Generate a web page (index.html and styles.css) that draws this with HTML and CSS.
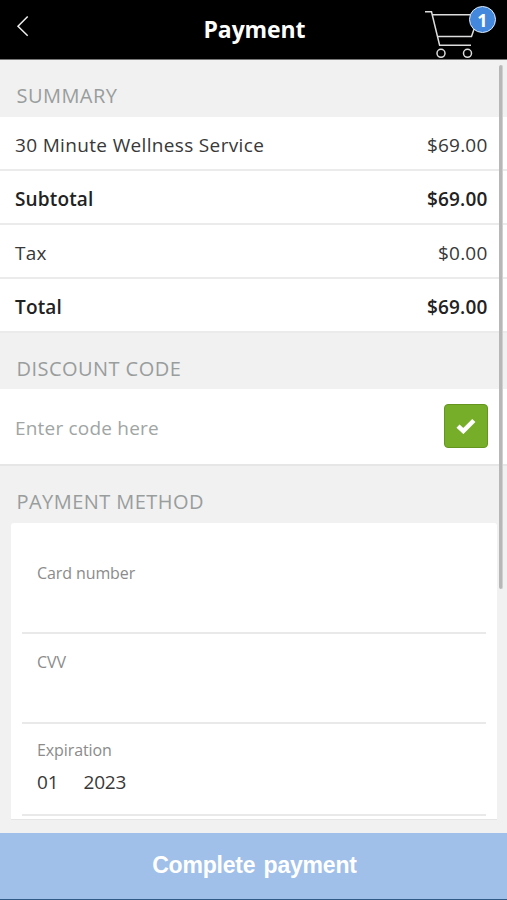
FILE: index.html
```html
<!DOCTYPE html>
<html lang="en">
<head>
<meta charset="utf-8">
<title>Payment</title>
<link rel="stylesheet" href="styles.css">
</head>
<body>
<div class="screen">
  <header class="topbar">
    <svg class="back" width="14" height="24" viewBox="0 0 14 24"><path d="M11.700 2.500 2 12.200l9.700 9.600"/></svg>
    <h1 class="title">Payment</h1>
    <div class="cart">
      <svg width="62" height="54" viewBox="0 0 62 54"><path d="M0 6.700h6.500L14.600 40.200H46M7.500 9.700H54L46.500 31.500H13"/><circle cx="16" cy="48.300" r="4"/><circle cx="42.500" cy="48.300" r="4"/></svg>
      <span class="badge">1</span>
    </div>
  </header>
  <main class="content">
    <h2 class="heading first">SUMMARY</h2>
    <div class="row"><span class="service">30 Minute Wellness Service</span><span>$69.00</span></div>
    <div class="row strong"><span>Subtotal</span><span>$69.00</span></div>
    <div class="row"><span>Tax</span><span>$0.00</span></div>
    <div class="row strong"><span>Total</span><span>$69.00</span></div>
    <h2 class="heading">DISCOUNT CODE</h2>
    <div class="discount">
      <span class="hint">Enter code here</span>
      <button class="apply" aria-label="Apply"><svg width="20" height="16" viewBox="0 0 20 16"><path d="M2 8.200 7.300 13 17.800 2.500"/></svg></button>
    </div>
    <h2 class="heading method">PAYMENT METHOD</h2>
    <section class="card">
      <div class="field number"><span class="label">Card number</span></div>
      <div class="field cvv"><span class="label">CVV</span></div>
      <div class="field expiry"><span class="label">Expiration</span><div class="date"><span>01</span><span>2023</span></div></div>
    </section>
    <div class="scrollbar"></div>
  </main>
  <button class="complete">Complete payment</button>
</div>
</body>
</html>
```
FILE: styles.css
```css
* { box-sizing: border-box; }
body { margin: 0; background: #f1f1f1; font-family: "Open Sans", sans-serif; color: #383838; }
.screen { height: 900px; display: flex; flex-direction: column; overflow: hidden; }
h1, h2 { margin: 0; }
button { border: 0; padding: 0; }

.topbar { height: 60px; flex: none; background: #000; border-bottom: 1px solid #777; display: grid; grid-template-columns: 90px 1fr 90px; position: relative; }
.back { margin: 14px 0 0 16px; fill: none; stroke: #eee; stroke-width: 1.500; }
.title { color: #fff; font-size: 23px; font-weight: 700; line-height: 32px; padding: 13px 0 0 2px; text-align: center; letter-spacing: -.1px; }
.cart { position: relative; padding: 5px 0 0 8px; }
.cart svg { display: block; fill: none; stroke: #ddd; stroke-width: 1.500; }
.badge { position: absolute; left: 52px; top: 6px; width: 27px; height: 27px; border: 1.500px solid #dcecff; border-radius: 50%; background: #4388dc; color: #fff; font-size: 18px; font-weight: 700; line-height: 26px; text-align: center; }

.content { position: relative; height: 773px; flex: none; }
.heading { height: 56px; padding: 21px 0 0 16.500px; background: #f1f1f1; color: #999d9d; font-size: 20px; font-weight: 400; line-height: 30px; letter-spacing: .45px; }
.heading.first { height: 57px; }
.heading.method { height: 57px; }
.row { height: 54px; padding: 3px 19.500px 0 15px; background: #fff; border-bottom: 2px solid #ebebeb; display: flex; align-items: center; justify-content: space-between; font-size: 19px; letter-spacing: .2px; }
.service { letter-spacing: .34px; }
.strong { font-weight: 600; color: #222; letter-spacing: .15px; }
.discount { height: 77px; padding: 0 19px 0 15px; background: #fff; border-bottom: 2px solid #e6e6e6; display: flex; align-items: center; justify-content: space-between; }
.hint { padding-top: 3px; color: #a0a5a4; font-size: 19px; letter-spacing: .2px; }
.apply { width: 44px; height: 44px; margin-top: -2px; border: 1px solid #64961f; border-radius: 4px; background: #77ae29; display: grid; place-items: center; }
.apply svg { fill: none; stroke: #fff; stroke-width: 4.500; }
.card { margin: 0 10px 0 11px; height: 297px; padding: 0 11px; background: #fff; border-radius: 3px 3px 0 0; border-bottom: 1px solid #e5e5e5; }
.field { border-bottom: 2px solid #e9e9e9; padding-left: 15px; }
.number { height: 111px; padding-top: 38px; }
.cvv { height: 90px; padding-top: 16px; }
.expiry { height: 92px; padding-top: 14px; }
.label { display: block; color: #8b8b8b; font-size: 16px; line-height: 24px; letter-spacing: -.1px; }
.date { display: flex; gap: 25px; margin-top: 7px; font-size: 19px; line-height: 26px; letter-spacing: -.15px; }
.scrollbar { position: absolute; right: 4px; top: 5px; width: 4px; height: 524px; border-radius: 2px; background: #b7b7b7; border-right: 1px solid #d0d0d0; }
.complete { height: 67px; flex: none; border-bottom: 1px solid #315b86; background: #a0c0e9; color: #fff; font: 700 23px/62px "Liberation Sans", sans-serif; padding: 0 0 2px 2px; letter-spacing: -.2px; word-spacing: 2px; }
```
